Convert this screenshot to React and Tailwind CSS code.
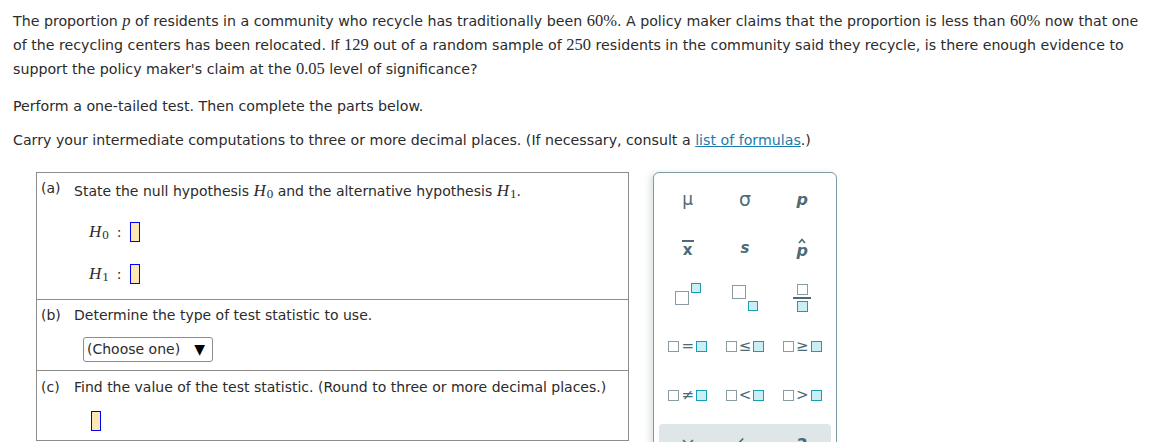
import { X, Undo2 } from "lucide-react";

const InBox = () => (
  <span className="inline-block w-[10px] h-[20px] border border-[#0000ff] bg-[#fde8b4] align-middle" />
);

const GBox = ({ s = 10 }) => (
  <span
    className="inline-block border-[1.5px] border-[#8a9ca3] bg-white"
    style={{ width: s, height: s }}
  />
);

const TBox = ({ s = 10 }) => (
  <span
    className="inline-block border-[1.5px] border-[#1b9cb5] bg-[#c9eef4]"
    style={{ width: s, height: s }}
  />
);

const Rel = ({ sym }) => (
  <span className="flex items-center gap-[1px] text-[#4d6b76] text-[15px] leading-none">
    <GBox s={11} />
    <span className="font-['DejaVu_Sans'] px-[1px]">{sym}</span>
    <TBox s={11} />
  </span>
);

const M = ({ children, i }) => (
  <span className={"font-['Liberation_Serif'] text-[16.5px] " + (i ? "italic" : "")}>{children}</span>
);

const H = ({ n }) => (
  <span className="font-['Liberation_Serif'] text-[17px] italic">
    H<sub className="not-italic text-[13px] relative top-[2px] ml-[1px]">{n}</sub>
  </span>
);

export default function App() {
  return (
    <div className="w-[1158px] h-[442px] overflow-hidden bg-white font-['DejaVu_Sans',sans-serif] text-[14.2px] text-[#2b2b2b]">
      <div className="pl-[13px] pt-[9px]">
        <p className="leading-[24px]">
          The proportion <M i>p</M> of residents in a community who recycle has traditionally been <M>60%</M>. A policy maker claims that the proportion is less than <M>60%</M> now that one
          <br />
          of the recycling centers has been relocated. If <M>129</M> out of a random sample of <M>250</M> residents in the community said they recycle, is there enough evidence to
          <br />
          support the policy maker's claim at the <M>0.05</M> level of significance?
        </p>
        <p className="leading-[24px] mt-[13px]">Perform a one-tailed test. Then complete the parts below.</p>
        <p className="leading-[24px] mt-[10px]">
          Carry your intermediate computations to three or more decimal places. (If necessary, consult a{" "}
          <span className="text-[#1a7cab] underline">list of formulas</span>.)
        </p>
      </div>

      <div className="flex items-start mt-[20px] pl-[36px]">
        <div className="w-[593px] border border-[#8c8c8c] text-[14px]">
          <div className="h-[126px] flex">
            <div className="w-[37px] pl-[4px] pt-[5px] leading-[20px]">(a)</div>
            <div className="flex-1">
              <div className="pt-[8px] leading-[20px]">
                State the null hypothesis <H n="0" /> and the alternative hypothesis <H n="1" />.
              </div>
              <div className="flex items-center h-[20px] mt-[21px] pl-[15px] gap-[8px]">
                <H n="0" />
                <span>:</span>
                <InBox />
              </div>
              <div className="flex items-center h-[20px] mt-[22px] pl-[15px] gap-[8px]">
                <H n="1" />
                <span>:</span>
                <InBox />
              </div>
            </div>
          </div>
          <div className="h-[71px] flex border-t border-[#8c8c8c]">
            <div className="w-[37px] pl-[4px] pt-[5px] leading-[20px]">(b)</div>
            <div className="flex-1">
              <div className="pt-[5px] leading-[20px]">Determine the type of test statistic to use.</div>
              <div className="mt-[12px] ml-[9px] w-[130px] h-[25px] border border-[#8c8c8c] rounded-[3px] flex items-center justify-between pl-[3px] pr-[7px]">
                <span>(Choose one)</span>
                <span className="text-[14px] text-black">▼</span>
              </div>
            </div>
          </div>
          <div className="h-[70px] flex border-t border-[#8c8c8c]">
            <div className="w-[37px] pl-[4px] pt-[6px] leading-[20px]">(c)</div>
            <div className="flex-1">
              <div className="pt-[6px] leading-[20px]">
                Find the value of the test statistic. (Round to three or more decimal places.)
              </div>
              <div className="mt-[13px] ml-[17px] h-[20px]">
                <InBox />
              </div>
            </div>
          </div>
        </div>

        <div className="ml-[24px] w-[184px] h-[300px] border border-[#7e9aa3] rounded-[6px] bg-white shadow-[-3px_1px_6px_rgba(60,90,100,0.18)] px-[5px] pt-[2px]">
          <div className="grid grid-cols-3 text-[#4d6b76]">
            <div className="h-[49px] flex items-center justify-center text-[17px] font-['DejaVu_Sans']">μ</div>
            <div className="h-[49px] flex items-center justify-center text-[19px] font-['DejaVu_Sans']">σ</div>
            <div className="h-[49px] flex items-center justify-center text-[16px] font-bold italic font-['DejaVu_Sans']">p</div>

            <div className="h-[49px] flex items-center justify-center">
              <span className="font-bold text-[15px] leading-none border-t-[2px] border-[#4d6b76] pt-[1px] px-[1px]">x</span>
            </div>
            <div className="h-[49px] flex items-center justify-center text-[15px] font-bold italic">s</div>
            <div className="h-[49px] flex flex-col items-center justify-center">
              <svg width="8" height="6" viewBox="0 0 8 6" className="-mb-[1px]">
                <path d="M1 5 L4 1.5 L7 5" fill="none" stroke="#4d6b76" strokeWidth="1.6" />
              </svg>
              <span className="text-[16px] font-bold italic leading-[16px]">p</span>
            </div>

            <div className="h-[49px] flex items-center justify-center">
              <span className="flex items-start gap-[2px]">
                <span className="mt-[7px]"><GBox s={14} /></span>
                <TBox s={10} />
              </span>
            </div>
            <div className="h-[49px] flex items-center justify-center">
              <span className="flex items-end gap-[2px]">
                <span className="mb-[5px]"><GBox s={14} /></span>
                <TBox s={10} />
              </span>
            </div>
            <div className="h-[49px] flex items-center justify-center">
              <span className="flex flex-col items-center gap-[2px]">
                <GBox s={11} />
                <span className="w-[18px] h-[2px] bg-[#4d6b76]" />
                <TBox s={11} />
              </span>
            </div>

            <div className="h-[49px] flex items-center justify-center"><Rel sym="=" /></div>
            <div className="h-[49px] flex items-center justify-center"><Rel sym="≤" /></div>
            <div className="h-[49px] flex items-center justify-center"><Rel sym="≥" /></div>

            <div className="h-[49px] flex items-center justify-center"><Rel sym="≠" /></div>
            <div className="h-[49px] flex items-center justify-center"><Rel sym="<" /></div>
            <div className="h-[49px] flex items-center justify-center"><Rel sym=">" /></div>
          </div>
          <div className="mt-[4px] h-[60px] rounded-[4px] bg-[#dfe6e8] grid grid-cols-3 pt-[12px] text-[#4d6b76]">
            <div className="flex justify-center"><X size={18} strokeWidth={2.2} /></div>
            <div className="flex justify-center"><Undo2 size={18} strokeWidth={2.2} /></div>
            <div className="flex justify-center text-[18px] font-bold leading-none">?</div>
          </div>
        </div>
      </div>
    </div>
  );
}
